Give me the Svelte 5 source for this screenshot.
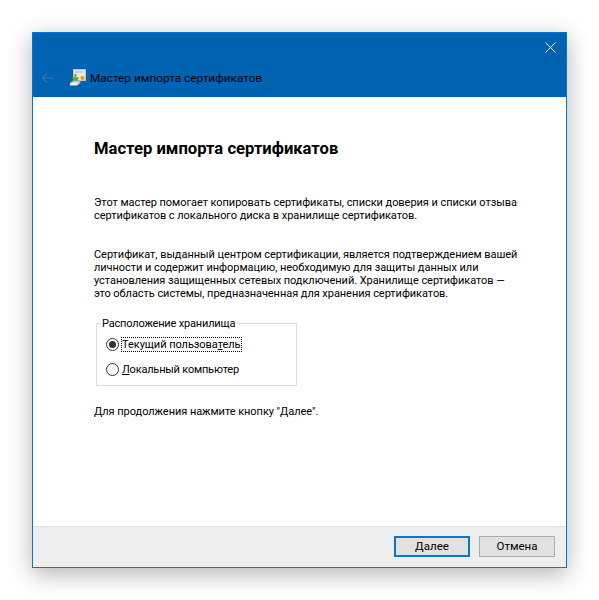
<script lang="ts">
	const intro = [
		'Этот мастер помогает копировать сертификаты, списки доверия и списки отзыва',
		'сертификатов с локального диска в хранилище сертификатов.'
	];
	const details = [
		'Сертификат, выданный центром сертификации, является подтверждением вашей',
		'личности и содержит информацию, необходимую для защиты данных или',
		'установления защищенных сетевых подключений. Хранилище сертификатов —',
		'это область системы, предназначенная для хранения сертификатов.'
	];
</script>

<div class="desktop">
	<div class="window">
		<header class="titlebar">
			<div class="close-row">
				<svg class="close" width="11" height="11" viewBox="0 0 11 11">
					<path d="M0.5 0.5 L10.5 10.5 M10.5 0.5 L0.5 10.5" stroke="#fff" stroke-width="1" fill="none" />
				</svg>
			</div>
			<div class="title-row">
				<svg class="back" width="14" height="12" viewBox="0 0 14 12">
					<path d="M12.5 6 H2 M6.2 1.4 L1.5 6 L6.2 10.6" stroke="#3272ab" stroke-width="1.5" fill="none" />
				</svg>
				<svg class="cert" width="18" height="18" viewBox="0 0 18 18">
					<rect x="4.5" y="0.5" width="12" height="11" fill="#ebe8dc" stroke="#bfc4c4" />
					<rect x="6" y="2" width="8" height="2" fill="#c3d0da" />
					<circle cx="13.5" cy="9" r="2" fill="#e69a1e" />
					<path d="M6.5 5 V11 M3.8 8.6 L6.5 11.8 L9.2 8.6" stroke="#56ad2c" stroke-width="2" fill="none" />
					<path d="M1 14 L4 12 H11 V14 L8 16.5 H1 Z" fill="#d9dcdc" stroke="#8d979e" stroke-width="0.8" />
					<rect x="1.5" y="14.5" width="6" height="1.5" fill="#fff" />
				</svg>
				<span class="title">Мастер импорта сертификатов</span>
			</div>
		</header>

		<main class="content">
			<h1>Мастер импорта сертификатов</h1>

			<p class="intro">
				{#each intro as line}<span>{line}</span>{/each}
			</p>
			<p class="details">
				{#each details as line}<span>{line}</span>{/each}
			</p>

			<fieldset class="store">
				<legend>Расположение хранилища</legend>
				<div class="radio-row first">
					<span class="radio checked"><i></i></span>
					<span class="label focused">Текущий пользова<u>т</u>ель</span>
				</div>
				<div class="radio-row">
					<span class="radio"></span>
					<span class="label second"><u>Л</u>окальный компьютер</span>
				</div>
			</fieldset>

			<p class="next">Для продолжения нажмите кнопку "Далее".</p>
		</main>

		<footer class="actions">
			<button class="primary"><u>Д</u>алее</button>
			<button>Отмена</button>
		</footer>
	</div>
</div>

<style>
	:global(body) {
		background: #fff;
	}

	.desktop {
		box-sizing: border-box;
		height: 600px;
		padding: 32px 0 0 32px;
		overflow: hidden;
	}

	.window {
		box-sizing: border-box;
		width: 535px;
		height: 536px;
		display: flex;
		flex-direction: column;
		background: #fff;
		border: 1px solid #0078d7;
		box-shadow: 0 6px 22px rgba(0, 0, 0, 0.3);
		font-family: Roboto, "Noto Sans", sans-serif;
		font-size: 11px;
		letter-spacing: -0.05px;
		line-height: 13px;
		color: #000;
	}

	.titlebar {
		height: 64px;
		flex-shrink: 0;
		background: #0063b1;
		display: flex;
		flex-direction: column;
	}

	.close-row {
		display: flex;
		justify-content: flex-end;
		padding: 9px 10px 0 0;
		height: 20px;
	}

	.close {
		display: block;
	}

	.title-row {
		display: flex;
		align-items: center;
		margin-top: 7px;
		padding-left: 8px;
	}

	.back {
		flex-shrink: 0;
	}

	.cert {
		flex-shrink: 0;
		margin-left: 14px;
	}

	.title {
		margin-left: 3px;
		font-size: 11.8px;
		letter-spacing: 0;
		white-space: nowrap;
	}

	.content {
		flex: 1;
		padding: 43px 0 0 61px;
	}

	h1 {
		margin: 0;
		font-size: 16.6px;
		letter-spacing: 0;
		line-height: 18px;
		font-weight: 700;
	}

	p {
		margin: 0;
	}

	p span {
		display: block;
		white-space: nowrap;
	}

	.intro {
		margin-top: 38px;
	}

	.details {
		margin-top: 26px;
	}

	.store {
		box-sizing: border-box;
		width: 201px;
		height: 69px;
		margin: 17px 0 0 2px;
		padding: 0;
		border: 1px solid #dcdcdc;
		min-width: 0;
	}

	legend {
		margin-left: 4px;
		padding: 0 1px;
		letter-spacing: -0.18px;
		line-height: 13px;
		white-space: nowrap;
	}

	.radio-row {
		display: flex;
		align-items: center;
		height: 15px;
		margin-top: 10px;
		margin-left: 9px;
	}

	.radio-row.first {
		margin-top: 7px;
	}

	.radio {
		box-sizing: border-box;
		width: 13px;
		height: 13px;
		flex-shrink: 0;
		border: 1px solid #333;
		border-radius: 50%;
		background: #fff;
		display: flex;
		align-items: center;
		justify-content: center;
	}

	.radio i {
		width: 7px;
		height: 7px;
		border-radius: 50%;
		background: #333;
	}

	.label {
		margin-left: 3px;
		white-space: nowrap;
	}

	.label.second {
		letter-spacing: -0.2px;
	}

	.focused {
		outline: 1px dotted #000;
	}

	.next {
		margin-top: 19px;
	}

	.actions {
		height: 41px;
		flex-shrink: 0;
		box-sizing: border-box;
		background: #eee;
		border-top: 1px solid #dfdfdf;
		display: flex;
		justify-content: flex-end;
		align-items: flex-start;
		gap: 9px;
		padding: 9px 11px 0 0;
	}

	button {
		box-sizing: border-box;
		width: 76px;
		height: 21px;
		padding: 0;
		background: #e1e1e1;
		border: 1px solid #adadad;
		font: inherit;
		font-size: 11.5px;
		letter-spacing: 0;
		color: #000;
	}

	button.primary {
		border: 2px solid #0078d7;
	}
</style>
